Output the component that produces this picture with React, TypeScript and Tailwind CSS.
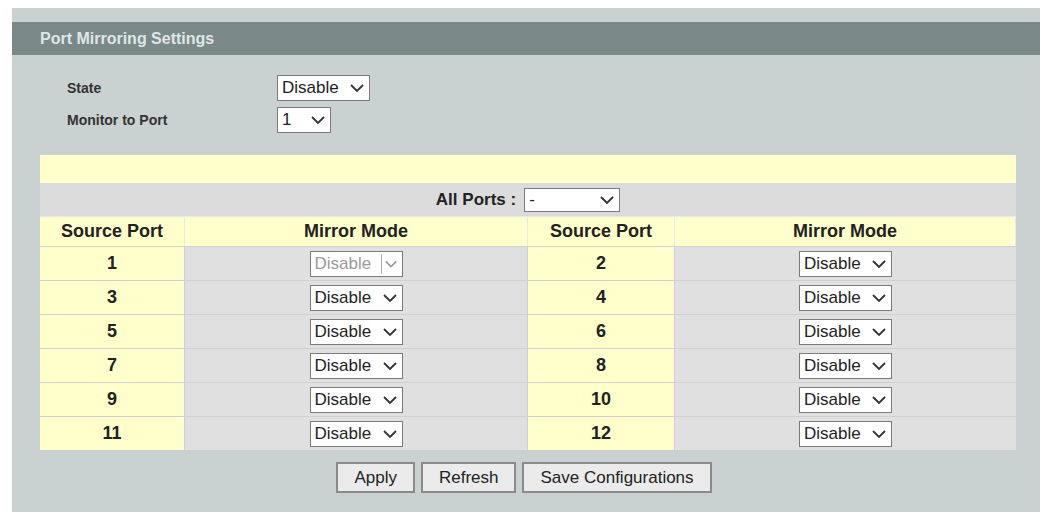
const Sel = ({ label, w = "w-[93px]", disabled = false }: { label: string; w?: string; disabled?: boolean }) => (
  <span
    className={`inline-flex h-[26px] ${w} items-center justify-between border border-[#7a7a7a] bg-white pl-1 pr-1 text-[17px] font-normal ${disabled ? "text-[#9a9a9a]" : "text-[#222]"}`}
  >
    {label}
    {disabled ? (
      <span className="flex h-[20px] items-center border-l border-[#aaa] pl-[2px]">
        <svg width="14" height="10" viewBox="0 0 16 10"><path d="M2 2 L8 8 L14 2" fill="none" stroke="#999" strokeWidth="1.8" /></svg>
      </span>
    ) : (
      <svg width="16" height="10" viewBox="0 0 16 10"><path d="M2 2 L8 8 L14 2" fill="none" stroke="#333" strokeWidth="1.8" /></svg>
    )}
  </span>
);

const Btn = ({ children }: { children: string }) => (
  <button className="h-[31px] border-2 border-[#8a8a8a] bg-[#ebebeb] px-4 text-[17px] text-[#222]">{children}</button>
);

export default function App() {
  const rows = [1, 3, 5, 7, 9, 11];
  return (
    <div className="h-[515px] w-[1046px] bg-white pt-2 pl-3 pr-[6px]" style={{ fontFamily: "'Liberation Sans', Arial, sans-serif" }}>
      <div className="h-[504px] bg-[#c9d1d1] pt-[14px]">
        <div className="flex h-[33px] items-center bg-[#7b8888] pl-[28px] text-[16px] font-bold text-[#dfe6e6]">Port Mirroring Settings</div>
        <div className="ml-[55px] mt-[20px] grid grid-cols-[210px_auto] items-center gap-y-[6px] text-[14px] font-bold text-[#333]">
          <span>State</span>
          <Sel label="Disable" />
          <span>Monitor to Port</span>
          <Sel label="1" w="w-[54px]" />
        </div>
        <div className="ml-[28px] mr-[24px] mt-[22px]">
          <div className="h-[28px] bg-[#ffffcc]" />
          <div className="flex h-[33px] items-center justify-center gap-2 bg-[#dcdcdc] text-[17px] font-bold text-[#222]">
            All Ports :
            <span className="inline-flex h-[24px] w-[96px] items-center justify-between border border-[#7a7a7a] bg-white pl-1 pr-1 font-normal">
              -
              <svg width="16" height="10" viewBox="0 0 16 10"><path d="M2 2 L8 8 L14 2" fill="none" stroke="#333" strokeWidth="1.8" /></svg>
            </span>
          </div>
          <div className="grid grid-cols-[145px_343px_147px_1fr] text-[18px] text-[#222]">
            {["Source Port", "Mirror Mode", "Source Port", "Mirror Mode"].map((h, i) => (
              <div key={i} className="flex h-[30px] items-center justify-center border-r border-t border-[#e8e8e8] bg-[#ffffcc] font-bold">{h}</div>
            ))}
            {rows.map((r) => [
              <div key={r + "a"} className="flex h-[34px] items-center justify-center border-r border-t border-[#d0d0d0] bg-[#ffffcc] font-bold">{r}</div>,
              <div key={r + "b"} className="flex h-[34px] items-center justify-center border-r border-t border-[#d0d0d0] bg-[#e0e0e0]"><Sel label="Disable" disabled={r === 1} /></div>,
              <div key={r + "c"} className="flex h-[34px] items-center justify-center border-r border-t border-[#d0d0d0] bg-[#ffffcc] font-bold">{r + 1}</div>,
              <div key={r + "d"} className="flex h-[34px] items-center justify-center border-t border-[#d0d0d0] bg-[#e0e0e0]"><Sel label="Disable" /></div>,
            ])}
          </div>
          <div className="mt-[12px] flex justify-center gap-[6px] pr-[8px]">
            <Btn>Apply</Btn>
            <Btn>Refresh</Btn>
            <Btn>Save Configurations</Btn>
          </div>
        </div>
      </div>
    </div>
  );
}
